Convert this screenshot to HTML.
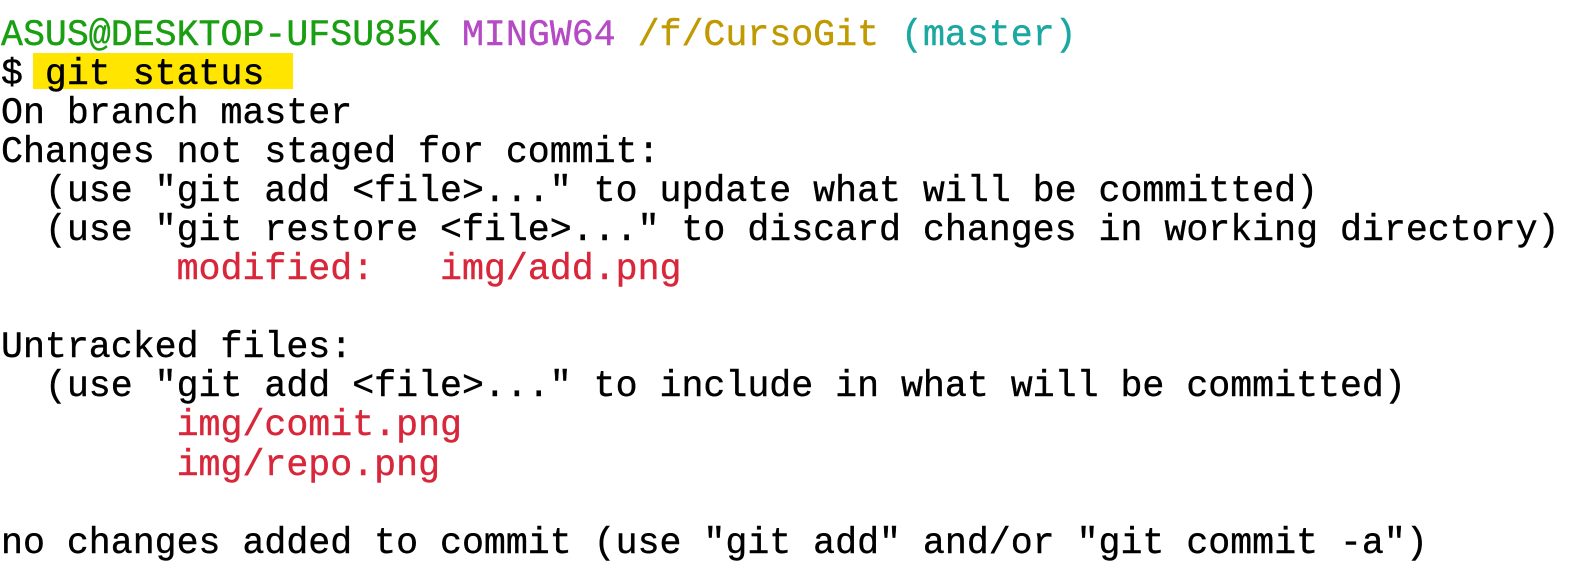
<!DOCTYPE html>
<html><head><meta charset="utf-8"><style>
html,body{margin:0;padding:0;background:#fff;width:1576px;height:582px;overflow:hidden}
pre{position:absolute;left:1px;top:16px;margin:0;font-family:"Liberation Mono","DejaVu Sans Mono",monospace;font-size:36.6px;line-height:39.05px;color:#000;white-space:pre;-webkit-text-stroke:0.4px currentColor}
.g{color:#1a9f12}.p{color:#b54ac5}.y{color:#c09a00}.c{color:#1aa8a0}.r{color:#d8263a}
.hl{position:absolute;left:33px;top:53px;width:260px;height:36px;background:#ffe500}
</style></head><body>
<div class="hl"></div>
<pre><span class="g">ASUS@DESKTOP-UFSU85K</span> <span class="p">MINGW64</span> <span class="y">/f/CursoGit</span> <span class="c">(master)</span>
$ git status
On branch master
Changes not staged for commit:
  (use "git add &lt;file&gt;..." to update what will be committed)
  (use "git restore &lt;file&gt;..." to discard changes in working directory)
        <span class="r">modified:   img/add.png</span>

Untracked files:
  (use "git add &lt;file&gt;..." to include in what will be committed)
        <span class="r">img/comit.png</span>
        <span class="r">img/repo.png</span>

no changes added to commit (use "git add" and/or "git commit -a")</pre>
</body></html>
